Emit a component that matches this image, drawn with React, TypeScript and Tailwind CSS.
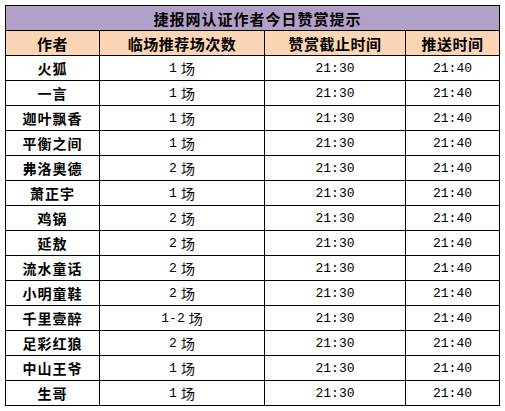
import React from "react";

const rows: [string, string, string, string][] = [
  ["火狐", "1", "21:30", "21:40"],
  ["一言", "1", "21:30", "21:40"],
  ["迦叶飘香", "1", "21:30", "21:40"],
  ["平衡之间", "1", "21:30", "21:40"],
  ["弗洛奥德", "2", "21:30", "21:40"],
  ["萧正宇", "1", "21:30", "21:40"],
  ["鸡锅", "2", "21:30", "21:40"],
  ["延敖", "2", "21:30", "21:40"],
  ["流水童话", "2", "21:30", "21:40"],
  ["小明童鞋", "2", "21:30", "21:40"],
  ["千里壹醉", "1-2", "21:30", "21:40"],
  ["足彩红狼", "2", "21:30", "21:40"],
  ["中山王爷", "1", "21:30", "21:40"],
  ["生哥", "1", "21:30", "21:40"],
];

const cjk = "font-['Noto_Sans_CJK_SC',sans-serif]";
const mono = "font-['Liberation_Mono',monospace]";

export default function App() {
  return (
    <div className="w-[505px] h-[411px] bg-white pt-[5px] pl-[5px]">
      <div className="w-[495px] bg-black p-px grid grid-cols-[93px_164px_140px_93px] auto-rows-[24px] gap-px text-black">
        <div className={`col-span-4 bg-[#b1a0c7] flex items-center justify-center pl-[10px] text-[15px] font-bold tracking-[1px] leading-none ${cjk}`}>
          捷报网认证作者今日赞赏提示
        </div>
        {["作者", "临场推荐场次数", "赞赏截止时间", "推送时间"].map((h) => (
          <div
            key={h}
            className={`bg-[#fcd5b4] flex items-center justify-center text-[15px] font-bold tracking-[0.5px] leading-none ${cjk}`}
          >
            {h}
          </div>
        ))}
        {rows.map(([name, n, a, b]) => (
          <React.Fragment key={name}>
            <div className={`bg-white flex items-center justify-center text-[14px] font-bold tracking-[1px] leading-none ${cjk}`}>
              {name}
            </div>
            <div className="bg-white flex items-center justify-center leading-none">
              <span className={`${mono} text-[13px]`}>{n}</span>
              <span className={`${cjk} text-[14px] ml-[4px]`}>场</span>
            </div>
            <div className={`bg-white flex items-center justify-center text-[13px] leading-none ${mono}`}>
              {a}
            </div>
            <div className={`bg-white flex items-center justify-center text-[13px] leading-none ${mono}`}>
              {b}
            </div>
          </React.Fragment>
        ))}
      </div>
    </div>
  );
}
